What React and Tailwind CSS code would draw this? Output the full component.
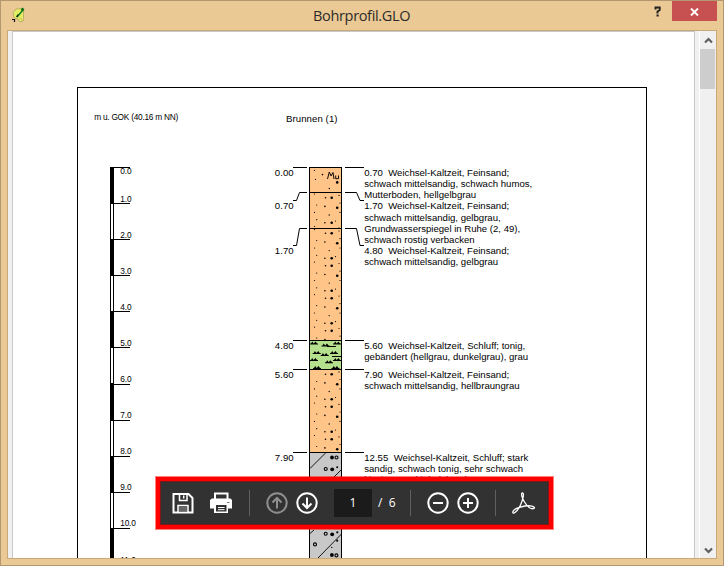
import React from 'react';

const ORANGE = '#ffc488';

const ruler = [167, 203, 239, 275, 311, 347, 384, 420, 456, 492, 528, 564];

const depths = [
  ['0.00', 176],
  ['0.70', 209],
  ['1.70', 254],
  ['4.80', 349],
  ['5.60', 378],
  ['7.90', 461],
];

// text, baseline, width
const notes = [
  ['0.70  Weichsel-Kaltzeit, Feinsand;', 176, 145],
  ['schwach mittelsandig, schwach humos,', 187, 168],
  ['Mutterboden, hellgelbgrau', 198, 112],
  ['1.70  Weichsel-Kaltzeit, Feinsand;', 209, 145],
  ['schwach mittelsandig, gelbgrau,', 221, 136.5],
  ['Grundwasserspiegel in Ruhe (2, 49),', 232, 156],
  ['schwach rostig verbacken', 243, 110.5],
  ['4.80  Weichsel-Kaltzeit, Feinsand;', 254, 145],
  ['schwach mittelsandig, gelbgrau', 265, 134],
  ['5.60  Weichsel-Kaltzeit, Schluff; tonig,', 349, 161],
  ['gebändert (hellgrau, dunkelgrau), grau', 360, 164],
  ['7.90  Weichsel-Kaltzeit, Feinsand;', 378, 145],
  ['schwach mittelsandig, hellbraungrau', 389, 155.5],
  ['12.55  Weichsel-Kaltzeit, Schluff; stark', 461, 164],
  ['sandig, schwach tonig, sehr schwach', 472, 159],
  ['kiesig, Geschiebelehm, k', 482.5, 105],
];

const grains = [
  [331.7, 0, 1.3], [337.2, 10, 1.3], [331.7, 25, 1.3],
  [325.5, 0, 0.8], [324.9, 8.7, 0.8], [329.2, 17.3, 0.7], [324.9, 25, 0.8],
  [339, -2.3, 0.6], [340, 5.3, 0.6], [340, 14.7, 0.6], [335.5, 23.3, 0.6],
  [316.7, 7.3, 0.6], [316.7, 22, 0.6], [314.5, 14.7, 0.6], [314.5, 28.8, 0.6],
];

function Sand({ top, bottom, start }) {
  const dots = [];
  for (let k = -1; k < 5; k++) {
    grains.forEach(([x, dy, r], i) => {
      const y = start + k * 32.5 + dy;
      if (y > top + 1.5 && y < bottom - 1) dots.push(<circle key={k + '-' + i} cx={x} cy={y} r={r} />);
    });
  }
  return (
    <g>
      <rect x="309" y={top} width="33" height={bottom - top} fill={ORANGE} />
      {dots}
    </g>
  );
}

const tufts = [
  [314, 343.5], [325.5, 345.5], [337, 343.5], [316.7, 353], [324.7, 355], [334, 353],
  [314, 360], [329, 362.3], [337, 360], [317, 368], [335.5, 368],
];

const pebbles = [[336.5, 457.5], [325.7, 469], [325.7, 533.7], [315, 544.4], [336.4, 555.4]];

function Profile() {
  return (
    <svg
      className="block shrink-0"
      width="681"
      height="526"
      viewBox="13 32 681 526"
      fontFamily="'Liberation Sans', Arial, sans-serif"
      fontSize="9.6"
    >
      <g shapeRendering="crispEdges" fill="none" stroke="#000">
        <path d="M77.500 600V87.500H646.500V600" />
      </g>
      <text x="94.200" y="120" fontSize="8.300" textLength="84">m u. GOK (40.16 m NN)</text>
      <text x="286" y="122" textLength="51.500">Brunnen (1)</text>

      <g shapeRendering="crispEdges">
        <rect x="110" y="167" width="4" height="400" />
        {ruler.map((y, i) => (
          <g key={y}>
            {i % 2 === 1 && <rect x="111" y={y + 1} width="2" height="35" fill="#fff" />}
            <rect x="110" y={y} width="20" height="1" />
          </g>
        ))}
      </g>
      <g fontSize="8.300">
        {ruler.map((y, i) => (
          <text key={y} x="120.300" y={i === 0 ? 174 : i === 11 ? 563 : 166 + i * 36} textLength={i > 9 ? 15.5 : 11.3}>
            {i + '.0'}
          </text>
        ))}
      </g>

      {depths.map(([t, y]) => (
        <text key={t} x="274.800" y={y} textLength="18.800">{t}</text>
      ))}
      {notes.map(([t, y, w]) => (
        <text key={y} x="364.200" y={y} textLength={w} style={{ whiteSpace: 'pre' }}>{t}</text>
      ))}

      <g fill="none" stroke="#000">
        <path d="M293 167.500H307M345 167.500H364M293 340.500H307M345 340.500H364M293 369.500H307M345 369.500H364M293 452.500H307M345 452.500H364" />
        <path d="M307 192.500H299.500L296.500 200.500H293M345 192.500H356.500L360 200.500H364" />
        <path d="M307 228.500H299.500L296.500 245.500H293M345 228.500H356.500L360 245.500H364" />
      </g>

      <rect x="309" y="167" width="33" height="26" fill={ORANGE} />
      <g>
        <circle cx="314.500" cy="170.300" r="0.600" />
        <circle cx="322.500" cy="174.600" r="0.800" />
        <circle cx="315.500" cy="179.300" r="0.600" />
        <circle cx="337.200" cy="182.400" r="1.300" />
        <circle cx="329.300" cy="188.500" r="0.700" />
        <path d="M327.500 179L329.300 172L331 176L333 172.500L334 179M335.700 175.500V178.700H338.500V175.500" fill="none" stroke="#000" strokeWidth="0.950" />
      </g>
      <Sand top={192} bottom={229} start={197.7} />
      <Sand top={228} bottom={341} start={233.3} />
      <rect x="309" y="340" width="33" height="30" fill="#b5e08e" />
      {tufts.map(([x, y]) => (
        <path key={x + '-' + y} d={`M${x - 4} ${y + 1}V${y}H${x - 3}L${x - 1.8} ${y - 2}L${x - 0.3} ${y}L${x + 1.5} ${y - 2}L${x + 3} ${y}H${x + 4}V${y + 1}Z`} />
      ))}
      <path d="M327 346.500H336M332 356.500H341" stroke="#000" />
      <Sand top={369} bottom={453} start={374.2} />

      <rect x="309" y="452" width="33" height="110" fill="#c8c8c8" />
      <g fill="none" stroke="#000">
        <path d="M310 468.500L325.500 453M331 480L341.500 469.500M310 533.500L314 530M318 558L341.500 534" strokeWidth="0.900" />
        {pebbles.map(([x, y]) => (
          <circle key={x + '-' + y} cx={x} cy={y} r="1.500" strokeWidth="1.100" />
        ))}
      </g>
      <circle cx="332" cy="457.500" r="1.900" />
      <circle cx="332.200" cy="469.300" r="1.900" />
      <circle cx="337.200" cy="467.300" r="1" />
      <circle cx="332.200" cy="534.300" r="1.900" />
      <circle cx="337.300" cy="532.300" r="1.100" />
      <circle cx="337.200" cy="540.700" r="1.100" />
      <circle cx="331.700" cy="547.400" r="0.700" />
      <circle cx="331.900" cy="555" r="1.900" />
      <g fill="none" stroke="#000" shapeRendering="crispEdges">
        <path d="M309.500 600V167.500H341.500V600M309 192.500H342M309 228.500H342M309 340.500H342M309 369.500H342M309 452.500H342" />
      </g>
    </svg>
  );
}

const iconProps = { width: 24, height: 24, viewBox: '0 0 24 24', fill: 'none', stroke: '#fff', strokeWidth: 2 };

const Divider = ({ className }) => <div className={'h-[26px] w-px shrink-0 bg-[#606060] ' + className} />;

function Toolbar() {
  return (
    <div className="absolute left-[154px] top-[475px] h-[54px] w-[399px] border border-[#ff0000]/50 bg-[#f00] bg-clip-padding p-[4px]">
      <div className="flex h-[44px] w-[389px] items-center border border-[#7d1717] bg-[#323232] font-['Open_Sans','Noto_Sans',sans-serif] text-[12px] text-white">
        <svg {...iconProps} className="ml-[10px] block shrink-0">
          <path d="M3 3H17.500L21.500 7V21.500H2.500V3Z" />
          <path d="M8.500 3V9.500H16V3" strokeWidth="1.500" />
          <path d="M12.700 4.500V7.500" strokeWidth="1.500" />
          <path d="M7 21V14.500H17V21" strokeWidth="1.500" />
          <rect x="8" y="16" width="8" height="4.500" fill="#666" stroke="none" />
        </svg>
        <svg {...iconProps} className="ml-[14px] block shrink-0">
          <path d="M6 8V2.500H18.500V8" />
          <path d="M3 7.500H21.500L23 9V17.500H1V9Z" fill="#fff" stroke="none" />
          <path d="M5 13.500H19V22H5Z" fill="#fff" stroke="none" />
          <path d="M7 14H17.500V20.500H7Z" fill="#323232" stroke="none" />
          <path d="M9 16.500H15.500M9 18.700H15.500" strokeWidth="1" />
          <path d="M18 11.500H20.500" stroke="#777" strokeWidth="1" />
        </svg>
        <Divider className="ml-[16px]" />
        <svg {...iconProps} stroke="#8f8f8f" className="ml-[15px] block shrink-0">
          <circle cx="12" cy="12" r="9.700" />
          <path d="M12 17.500V7.500M7.500 11.500L12 7L16.500 11.500" />
        </svg>
        <svg {...iconProps} className="ml-[6px] block shrink-0">
          <circle cx="12" cy="12" r="9.700" />
          <path d="M12 6.500V16.500M7.500 12.500L12 17L16.500 12.500" />
        </svg>
        <div className="ml-[15px] flex h-[28px] w-[38px] shrink-0 items-center justify-center bg-[#1b1b1b]">1</div>
        <div className="ml-[6px] w-[18px] shrink-0 whitespace-pre">/  6</div>
        <Divider className="ml-[14px]" />
        <svg {...iconProps} className="ml-[15px] block shrink-0">
          <circle cx="12" cy="12" r="9.700" />
          <path d="M7 12H17" />
        </svg>
        <svg {...iconProps} className="ml-[6px] block shrink-0">
          <circle cx="12" cy="12" r="9.700" />
          <path d="M7 12H17M12 7V17" />
        </svg>
        <Divider className="ml-[15px]" />
        <svg {...iconProps} strokeWidth="1.300" className="ml-[16px] block shrink-0">
          <path d="M10.500 2C8.500 2 10 7 12.500 11C15 15 19 18.500 22 17.500C24 16 19 14 13 15C7 16 1 18.500 .8 21C.8 24 5.500 20.500 8.500 14C11 8.500 12.500 2 10.500 2Z" />
        </svg>
      </div>
    </div>
  );
}

export default function App() {
  return (
    <div className="relative flex h-[566px] w-[724px] flex-col overflow-hidden border border-[#b39770] bg-[#ebc994]">
      <header className="flex h-[29px] shrink-0 items-start">
        <svg className="ml-[11px] mt-[6px] block shrink-0" width="14" height="16" viewBox="0 0 14 16">
          <path d="M4 2L8.500 1.500L11.500 4V10L11 14L8 15L6 12L2 11L1 6Z" fill="#e3ee66" stroke="#b3a55a" strokeWidth="0.800" />
          <path d="M7 10.500L10 13" stroke="#c9b860" />
          <path d="M5 10L11 3" stroke="#16851c" strokeWidth="1.600" />
          <path d="M4.500 10L6.500 7.500" stroke="#123d12" strokeWidth="1.500" />
          <path d="M0 12.500H2.500V15" stroke="#111" fill="none" strokeWidth="1.200" />
          <path d="M9.500 3.500L11.500 1.500" stroke="#08700f" strokeWidth="2.600" />
        </svg>
        <div className="ml-[287px] w-[98px] shrink-0 whitespace-nowrap font-['Open_Sans','Noto_Sans',sans-serif] text-[14.5px] leading-[29px] tracking-[-0.33px] text-[#2b2b2b]">
          Bohrprofil.GLO
        </div>
        <svg className="ml-[243px] mt-[5px] block shrink-0" width="8" height="11" viewBox="0 0 8 11">
          <path d="M1.500 3.500V1.500H5.700V4L3.500 5.500V7.500M2.500 9.500H4.700" fill="none" stroke="#222" strokeWidth="1.900" />
        </svg>
        <div className="ml-[10px] flex h-[20px] w-[45px] shrink-0 items-center justify-center bg-[#c75050]">
          <svg className="mt-[1px] block" width="9" height="8" viewBox="0 0 9 8">
            <path d="M1 0.500L8 7.500M8 0.500L1 7.500" stroke="#fff" strokeWidth="1.900" />
          </svg>
        </div>
      </header>
      <main className="ml-[6px] flex h-[529px] w-[710px] shrink-0 border border-[#c9a97a] bg-[#f0f0f0]">
        <div className="ml-[4px] flex w-[683px] shrink-0 flex-col overflow-hidden border-x border-t border-[#c8c8c8] bg-white">
          <Profile />
        </div>
        <div className="ml-[4px] flex w-[17px] shrink-0 flex-col items-center border-l border-white bg-[#f0f0f0]">
          <svg className="mt-[6px] block shrink-0" width="9" height="7" viewBox="0 0 9 7">
            <path d="M1 5.500L4.500 2L8 5.500" fill="none" stroke="#606060" strokeWidth="2.200" />
          </svg>
          <div className="mt-[5px] h-[40px] w-[15px] shrink-0 self-start bg-[#cdcdcd]" />
          <svg className="mb-[4px] mt-auto block shrink-0" width="9" height="7" viewBox="0 0 9 7">
            <path d="M1 1.500L4.500 5L8 1.500" fill="none" stroke="#606060" strokeWidth="2.200" />
          </svg>
        </div>
      </main>
      <Toolbar />
    </div>
  );
}
